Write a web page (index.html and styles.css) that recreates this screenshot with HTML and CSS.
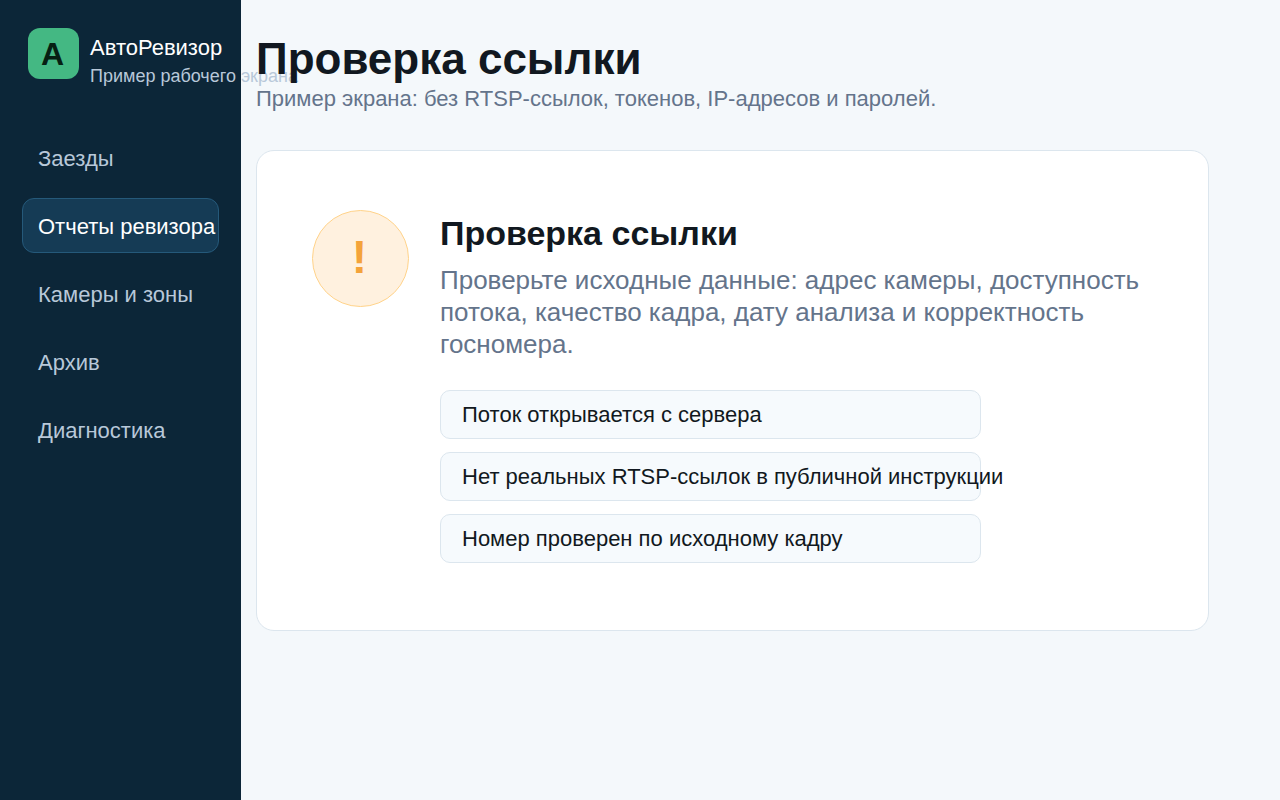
FILE: index.html
```html
<!DOCTYPE html>
<html lang="ru">
<head>
<meta charset="utf-8">
<meta name="viewport" content="width=device-width, initial-scale=1">
<title>АвтоРевизор — Проверка ссылки</title>
<link rel="stylesheet" href="styles.css">
</head>
<body>
<div class="app">
  <aside class="sidebar">
    <div class="brand">
      <div class="brand-logo">А</div>
      <div class="brand-text">
        <div class="brand-name">АвтоРевизор</div>
        <div class="brand-note">Пример рабочего экрана</div>
      </div>
    </div>
    <nav class="nav">
      <a class="nav-link" href="#">Заезды</a>
      <a class="nav-link nav-link-active" href="#" aria-current="page">Отчеты ревизора</a>
      <a class="nav-link" href="#">Камеры и зоны</a>
      <a class="nav-link" href="#">Архив</a>
      <a class="nav-link" href="#">Диагностика</a>
    </nav>
  </aside>
  <main class="main">
    <header class="page-head">
      <h1 class="page-title">Проверка ссылки</h1>
      <p class="page-note">Пример экрана: без RTSP-ссылок, токенов, IP-адресов и паролей.</p>
    </header>
    <section class="card">
      <div class="alert-icon">!</div>
      <div class="card-body">
        <h2 class="card-title">Проверка ссылки</h2>
        <p class="card-text">Проверьте исходные данные: адрес камеры, доступность потока, качество кадра, дату анализа и корректность госномера.</p>
        <ul class="checks">
          <li class="check">Поток открывается с сервера</li>
          <li class="check">Нет реальных RTSP-ссылок в публичной инструкции</li>
          <li class="check">Номер проверен по исходному кадру</li>
        </ul>
      </div>
    </section>
  </main>
</div>
</body>
</html>
```
FILE: styles.css
```css
* {
  box-sizing: border-box;
}

body {
  margin: 0;
  background: #f4f8fb;
  color: #111820;
  font-family: "Liberation Sans", Arial, sans-serif;
  font-size: 22px;
  line-height: 24px;
}

h1, h2, p, ul {
  margin: 0;
  padding: 0;
}

.app {
  display: flex;
  min-height: 100vh;
}

.sidebar {
  flex: 0 0 241px;
  min-width: 0;
  padding: 28px 22px;
  background: #0c2638;
}

.brand {
  display: flex;
  gap: 11px;
  padding-left: 6px;
}

.brand-logo {
  flex: none;
  display: flex;
  align-items: center;
  justify-content: center;
  width: 51px;
  height: 51px;
  padding-right: 2px;
  border-radius: 12px;
  background: #44b883;
  color: #062012;
  font-size: 32px;
  font-weight: 700;
}

.brand-text {
  padding-top: 8px;
  white-space: nowrap;
}

.brand-name {
  color: #fff;
}

.brand-note {
  padding-top: 4px;
  color: #b8c8d9;
  font-size: 18px;
}

.nav {
  display: flex;
  flex-direction: column;
  gap: 13px;
  margin-top: 42px;
}

.nav-link {
  display: flex;
  align-items: center;
  height: 55px;
  padding: 2px 0 0 15px;
  border: 1px solid transparent;
  border-radius: 12px;
  color: #b8c8d9;
  text-decoration: none;
  white-space: nowrap;
}

.nav-link-active {
  border-color: #25597a;
  background: #153b55;
  color: #fff;
}

.main {
  position: relative;
  flex: 1;
  min-width: 0;
  padding: 37px 71px 37px 15px;
}

.page-title {
  font-size: 44px;
  line-height: 44px;
}

.page-note {
  padding-top: 6px;
  color: #64748b;
}

.card {
  display: flex;
  align-items: flex-start;
  gap: 31px;
  margin-top: 39px;
  padding: 59px 55px 67px;
  border: 1px solid #dce6ee;
  border-radius: 18px;
  background: #fff;
}

.alert-icon {
  flex: none;
  display: flex;
  align-items: center;
  justify-content: center;
  width: 97px;
  height: 97px;
  padding: 0 2px 4px 0;
  border: 1px solid #ffd38a;
  border-radius: 50%;
  background: #fff1df;
  color: #f4a33a;
  font-size: 46px;
  font-weight: 700;
}

.card-body {
  flex: 1;
  min-width: 0;
  padding-top: 3px;
}

.card-title {
  font-size: 34px;
  line-height: 40px;
}

.card-text {
  padding-top: 11px;
  color: #64748b;
  font-size: 26px;
  line-height: 32px;
}

.checks {
  display: flex;
  flex-direction: column;
  gap: 13px;
  max-width: 541px;
  margin-top: 30px;
  list-style: none;
}

.check {
  display: flex;
  align-items: center;
  height: 49px;
  padding-left: 21px;
  border: 1px solid #dce6ee;
  border-radius: 10px;
  background: #f6fafd;
  white-space: nowrap;
}
```
